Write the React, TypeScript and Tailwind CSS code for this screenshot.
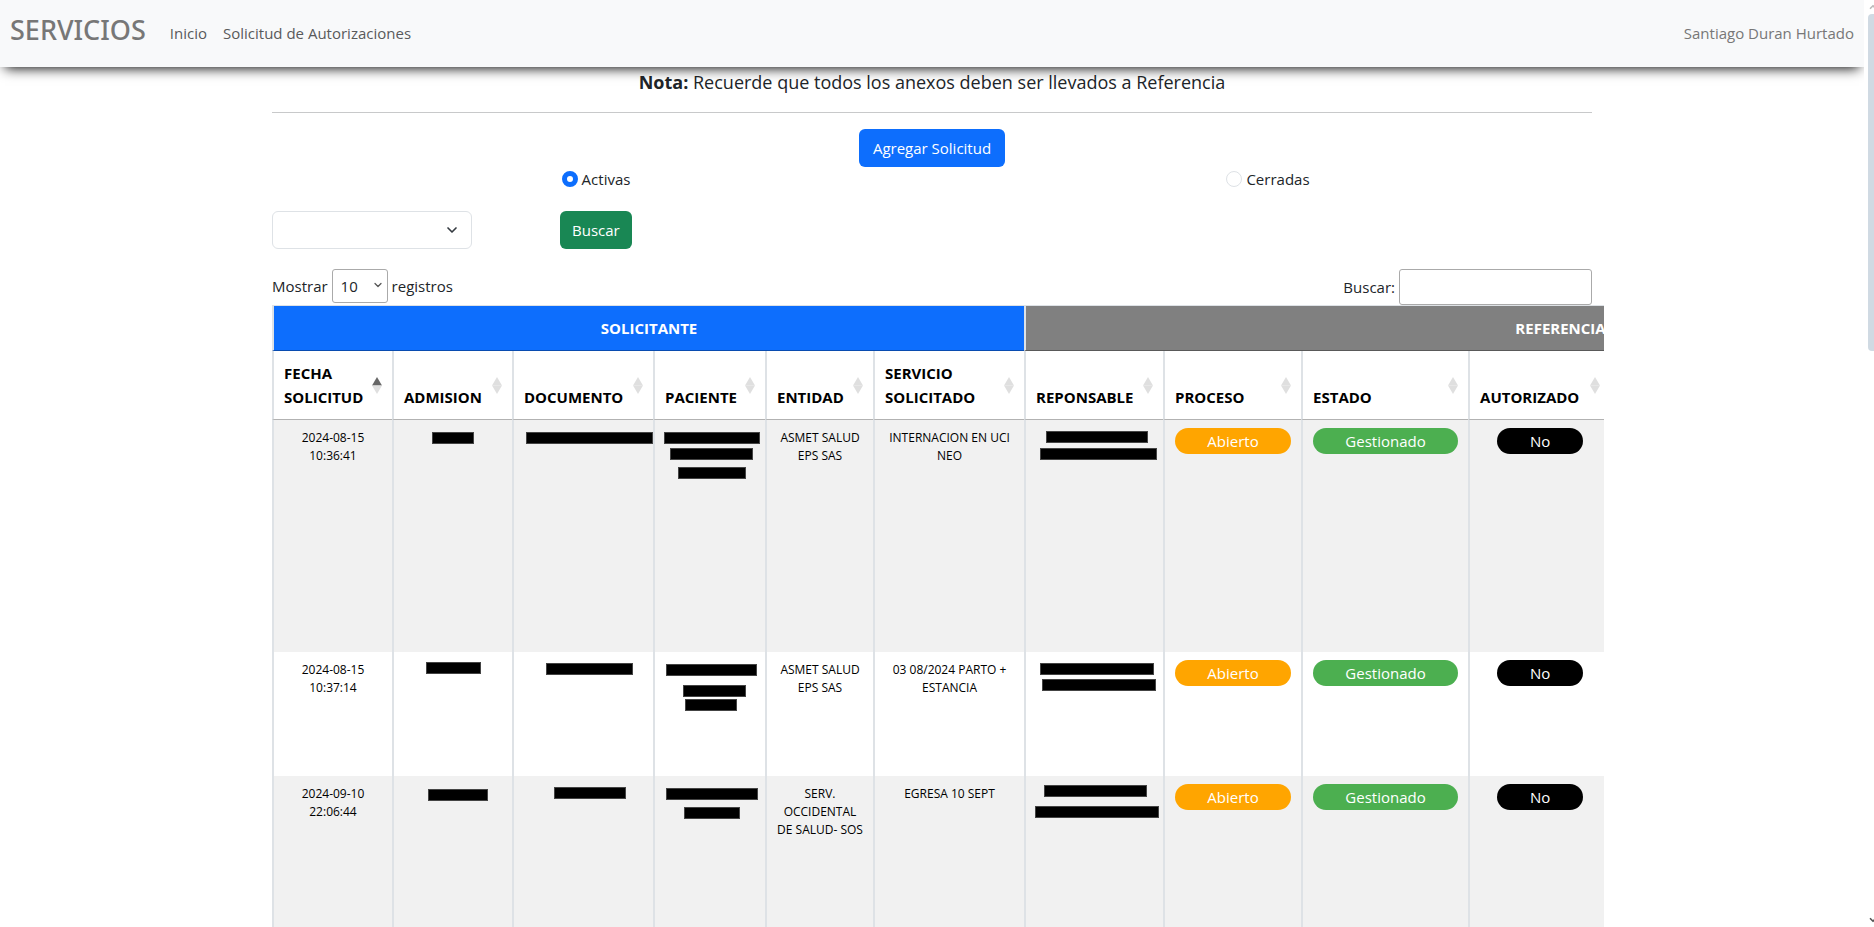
import { useState } from "react";
import { ChevronDown, ChevronUp } from "lucide-react";

type Bar = [x: number, y: number, width: number];

type Row = {
  fecha: string[];
  admision: Bar[];
  documento: Bar[];
  paciente: Bar[];
  entidad: string[];
  servicio: string[];
  responsable: Bar[];
  height: string;
};

const rows: Row[] = [
  {
    fecha: ["2024-08-15", "10:36:41"],
    admision: [[38, 12, 42]],
    documento: [[12, 12, 127]],
    paciente: [[9, 12, 96], [15, 28, 83], [23, 47, 68]],
    entidad: ["ASMET SALUD", "EPS SAS"],
    servicio: ["INTERNACION EN UCI", "NEO"],
    responsable: [[20, 11, 102], [14, 28, 117]],
    height: "h-[232px]",
  },
  {
    fecha: ["2024-08-15", "10:37:14"],
    admision: [[32, 10, 55]],
    documento: [[32, 11, 87]],
    paciente: [[11, 12, 91], [28, 33, 63], [30, 47, 52]],
    entidad: ["ASMET SALUD", "EPS SAS"],
    servicio: ["03 08/2024 PARTO +", "ESTANCIA"],
    responsable: [[14, 11, 114], [16, 27, 114]],
    height: "h-[124px]",
  },
  {
    fecha: ["2024-09-10", "22:06:44"],
    admision: [[34, 13, 60]],
    documento: [[40, 11, 72]],
    paciente: [[11, 12, 92], [29, 31, 56]],
    entidad: ["SERV.", "OCCIDENTAL", "DE SALUD- SOS"],
    servicio: ["EGRESA 10 SEPT"],
    responsable: [[18, 9, 103], [9, 30, 124]],
    height: "h-[232px]",
  },
];

const headings: string[][] = [
  ["FECHA", "SOLICITUD"],
  ["ADMISION"],
  ["DOCUMENTO"],
  ["PACIENTE"],
  ["ENTIDAD"],
  ["SERVICIO", "SOLICITADO"],
  ["REPONSABLE"],
  ["PROCESO"],
  ["ESTADO"],
  ["AUTORIZADO"],
];

const cell = "border-l-2 border-[#dee2e6] align-top";

function SortIcon({ ascending }: { ascending: boolean }) {
  return (
    <svg className="h-[17px] w-[10px] shrink-0 self-center" viewBox="0 0 10 17" aria-hidden="true">
      <path d="M5 0L10 8.5H0Z" fill={ascending ? "#666666" : "#dfdfdf"} />
      <path d="M0 8.5H10L5 17Z" fill="#dfdfdf" />
    </svg>
  );
}

function TextCell({ lines }: { lines: string[] }) {
  return (
    <td className={`${cell} pt-[9px] text-center text-[12px] leading-[18px] whitespace-nowrap text-black`}>
      {lines.map((line) => (
        <div key={line}>{line}</div>
      ))}
    </td>
  );
}

function HiddenCell({ bars }: { bars: Bar[] }) {
  return (
    <td className={cell}>
      <svg className="block h-16 w-full" aria-hidden="true">
        {bars.map(([x, y, width]) => (
          <rect key={y} x={x + 0.5} y={y + 0.5} width={width - 1} height={11} fill="#000" stroke="#444" />
        ))}
      </svg>
    </td>
  );
}

function Pill({ text, color }: { text: string; color: string }) {
  return (
    <td className={`${cell} px-[10px] pt-2`}>
      <div className={`mx-auto h-[26px] rounded-full text-center text-[15px] leading-[27px] text-white ${color}`}>
        {text}
      </div>
    </td>
  );
}

export default function App() {
  const [filter, setFilter] = useState("activas");
  const radio =
    "size-4 appearance-none rounded-full border border-[#dee2e6] bg-white checked:border-[5px] checked:border-[#0d6efd]";

  return (
    <div className="flex h-screen overflow-hidden bg-white font-['Open_Sans','Noto_Sans',sans-serif] text-[15px] leading-6 text-[#212529]">
      <div className="min-w-0 flex-1 overflow-hidden">
        <nav className="relative flex h-[67px] items-center bg-[#f8f9fa] px-[10px] pb-[2px] shadow-[0_6px_12px_-5px_#000]">
          <a href="#" className="mr-6 pb-[5px] font-['Noto_Sans',sans-serif] text-[27px] leading-8 font-medium text-[#777777]">
            SERVICIOS
          </a>
          <a href="#" className="mr-4 text-[#595a5b]">
            Inicio
          </a>
          <a href="#" className="text-[#595a5b]">
            Solicitud de Autorizaciones
          </a>
          <a href="#" className="ml-auto text-[#777777]">
            Santiago Duran Hurtado
          </a>
        </nav>

        <main className="mx-auto max-w-[1344px]">
          <div className="px-3">
            <p className="text-center text-[18px] leading-[30px]">
              <strong>Nota:</strong> Recuerde que todos los anexos deben ser llevados a Referencia
            </p>
            <hr className="mt-[15px] border-[#c8c9ca]" />
          </div>

          <div className="mt-4 flex justify-center">
            <button className="h-[38px] rounded-md bg-[#0d6efd] px-[14px] text-white">Agregar Solicitud</button>
          </div>

          <div className="grid grid-cols-2">
            <label className="flex items-center justify-center gap-1">
              <input
                type="radio"
                name="filtro"
                className={radio}
                checked={filter === "activas"}
                onChange={() => setFilter("activas")}
              />
              Activas
            </label>
            <label className="flex items-center justify-center gap-1">
              <input
                type="radio"
                name="filtro"
                className={radio}
                checked={filter === "cerradas"}
                onChange={() => setFilter("cerradas")}
              />
              Cerradas
            </label>
          </div>

          <div className="mt-5 flex gap-[88px] px-3">
            <div className="relative">
              <select
                aria-label="Servicio"
                className="h-[38px] w-[200px] appearance-none rounded-md border border-[#dee2e6] bg-white px-3"
              >
                <option></option>
              </select>
              <ChevronDown
                className="pointer-events-none absolute top-[11px] right-3 text-[#343a40]"
                size={16}
                strokeWidth={2.5}
              />
            </div>
            <button className="h-[38px] rounded-md bg-[#198754] px-3 text-white">Buscar</button>
          </div>

          <div className="mt-5 flex items-start justify-between px-3">
            <label className="flex items-center gap-1">
              Mostrar
              <span className="relative">
                <select className="block h-[34px] w-14 appearance-none rounded-[3px] border border-[#aaaaaa] bg-white pl-2">
                  <option>10</option>
                </select>
                <ChevronDown
                  className="pointer-events-none absolute top-[10px] right-1 text-[#555555]"
                  size={12}
                  strokeWidth={2.5}
                />
              </span>
              registros
            </label>
            <label className="flex items-center gap-1">
              Buscar:
              <input type="search" className="h-9 w-[193px] rounded-[3px] border border-[#aaaaaa] bg-white px-2" />
            </label>
          </div>

          <div className="overflow-hidden pl-3">
            <table className="w-[1823px] table-fixed border-separate border-spacing-0">
              <colgroup>
                <col className="w-[120px]" />
                <col className="w-[120px]" />
                <col className="w-[141px]" />
                <col className="w-[112px]" />
                <col className="w-[108px]" />
                <col className="w-[151px]" />
                <col className="w-[139px]" />
                <col className="w-[138px]" />
                <col className="w-[167px]" />
                <col className="w-[142px]" />
                <col />
              </colgroup>
              <thead>
                <tr className="h-[46px] text-white">
                  <th
                    colSpan={6}
                    className="border-t border-b border-l-2 border-t-[#dee2e6] border-b-black/30 border-l-[#dee2e6] bg-[#0d6efd]"
                  >
                    SOLICITANTE
                  </th>
                  <th
                    colSpan={5}
                    className="border-t border-b border-l-2 border-t-[#dee2e6] border-b-black/30 border-l-[#dee2e6] bg-[#808080]"
                  >
                    REFERENCIA
                  </th>
                </tr>
                <tr className="h-[69px] text-black">
                  {headings.map((lines, i) => (
                    <th
                      key={lines.join(" ")}
                      aria-sort={i === 0 ? "ascending" : undefined}
                      className="border-b border-l-2 border-b-black/30 border-l-[#dee2e6] px-[10px] text-left align-bottom whitespace-nowrap"
                    >
                      <button className="flex h-[68px] w-full items-center justify-between text-left font-bold">
                        <span className="self-end pb-[10px]">
                          {lines.map((line) => (
                            <span key={line} className="block">
                              {line}
                            </span>
                          ))}
                        </span>
                        <SortIcon ascending={i === 0} />
                      </button>
                    </th>
                  ))}
                  <th className="border-b border-l-2 border-b-black/30 border-l-[#dee2e6]" />
                </tr>
              </thead>
              <tbody>
                {rows.map((row) => (
                  <tr key={row.fecha.join(" ")} className={`${row.height} odd:bg-[#f1f1f1]`}>
                    <TextCell lines={row.fecha} />
                    <HiddenCell bars={row.admision} />
                    <HiddenCell bars={row.documento} />
                    <HiddenCell bars={row.paciente} />
                    <TextCell lines={row.entidad} />
                    <TextCell lines={row.servicio} />
                    <HiddenCell bars={row.responsable} />
                    <Pill text="Abierto" color="bg-[#ffa500]" />
                    <Pill text="Gestionado" color="bg-[#4caf50]" />
                    <Pill text="No" color="w-[86px] bg-black" />
                    <td className={cell} />
                  </tr>
                ))}
              </tbody>
            </table>
          </div>
        </main>
      </div>

      <div className="flex w-[10px] shrink-0 flex-col items-end overflow-hidden" aria-hidden="true">
        <ChevronUp className="-mr-1 h-[14px] shrink-0 text-[#bbbbbb]" size={10} strokeWidth={4} />
        <div className="h-[337px] w-[6px] rounded-l-sm bg-[#d0dae3]" />
        <ChevronDown className="mt-auto -mr-1 h-[14px] shrink-0 text-[#555555]" size={10} strokeWidth={4} />
      </div>
    </div>
  );
}
